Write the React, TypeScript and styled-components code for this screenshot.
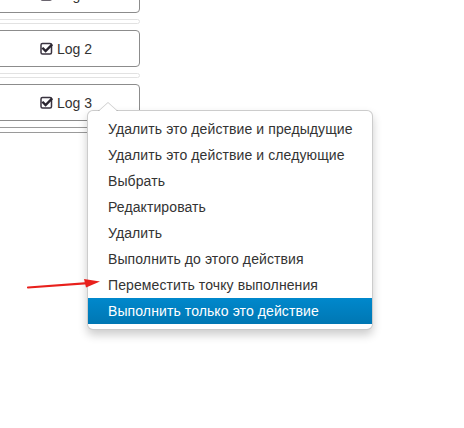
import React from "react";
import styled, { createGlobalStyle } from "styled-components";

const Global = createGlobalStyle`
  html, body { margin: 0; padding: 0; background: #fff; }
  body { font-family: "Liberation Sans", Arial, Helvetica, sans-serif; font-size: 14px; color: #333; }
`;

const Page = styled.div`
  position: relative;
  width: 464px;
  height: 428px;
  overflow: hidden;
  background: #fff;
`;

const LogColumn = styled.div`
  display: flex;
  flex-direction: column;
  gap: 6px;
  width: 148px;
  margin-left: -8px;
  margin-top: -24px;
`;

const LogButton = styled.div`
  box-sizing: border-box;
  height: 37px;
  display: flex;
  align-items: center;
  justify-content: center;
  gap: 4px;
  background: #fff;
  border: 1px solid #8c8c8c;
  border-radius: 4px;
  font-size: 14px;
  color: #333;
`;

const CheckIcon = styled.svg`
  width: 13px;
  height: 13px;
  margin-top: -1px;
  flex: none;
`;

const Separator = styled.div<{ $active?: boolean }>`
  box-sizing: border-box;
  height: ${(p) => (p.$active ? "6px" : "5px")};
  border: 1px solid ${(p) => (p.$active ? "#9a9a9a" : "#e2e2e2")};
  border-radius: 3px;
  background: #fff;
`;

const Menu = styled.ul`
  position: absolute;
  left: 87px;
  top: 110px;
  box-sizing: border-box;
  width: 286px;
  margin: 0;
  padding: 5px 0;
  list-style: none;
  background: #fff;
  border: 1px solid rgba(0, 0, 0, 0.2);
  border-radius: 6px;
  box-shadow: 0 5px 10px rgba(0, 0, 0, 0.2);
  &::before {
    content: "";
    position: absolute;
    top: -9px;
    left: 10px;
    border-style: solid;
    border-width: 0 10px 9px;
    border-color: transparent transparent rgba(0, 0, 0, 0.2);
  }
  &::after {
    content: "";
    position: absolute;
    top: -8px;
    left: 11px;
    border-style: solid;
    border-width: 0 9px 8px;
    border-color: transparent transparent #fff;
  }
`;

const MenuItem = styled.li<{ $active?: boolean }>`
  padding: 3px 20px;
  line-height: 20px;
  font-size: 14px;
  letter-spacing: 0.1px;
  white-space: nowrap;
  color: ${(p) => (p.$active ? "#fff" : "#333")};
  background: ${(p) =>
    p.$active ? "linear-gradient(to bottom, #0088cc, #0077b3)" : "transparent"};
`;

const Pointer = styled.svg`
  position: absolute;
  left: 26px;
  top: 276px;
`;

const Check = () => (
  <CheckIcon viewBox="0 0 13 13">
    <rect x="1" y="1.5" width="10.5" height="10.5" rx="1.5" fill="none" stroke="#3a3340" strokeWidth="1.5" />
    <path d="M3.2 6.6 L5.6 9 L11.4 3.2" fill="none" stroke="#2a2530" strokeWidth="2.4" strokeLinecap="square" />
  </CheckIcon>
);

const items = [
  "Удалить это действие и предыдущие",
  "Удалить это действие и следующие",
  "Выбрать",
  "Редактировать",
  "Удалить",
  "Выполнить до этого действия",
  "Переместить точку выполнения",
  "Выполнить только это действие",
];

export default function App() {
  return (
    <Page>
      <Global />
      <LogColumn>
        <LogButton>
          <Check /> Log 1
        </LogButton>
        <Separator />
        <LogButton>
          <Check /> Log 2
        </LogButton>
        <Separator />
        <LogButton>
          <Check /> Log 3
        </LogButton>
        <Separator $active />
      </LogColumn>
      <Menu>
        {items.map((t, i) => (
          <MenuItem key={t} $active={i === items.length - 1}>
            {t}
          </MenuItem>
        ))}
      </Menu>
      <Pointer width="78" height="16" viewBox="0 0 78 16">
        <path d="M2 11.5 L62 7.2" stroke="#e8201c" strokeWidth="2.2" strokeLinecap="round" fill="none" />
        <path d="M58 3 L74 5.6 L60 11.5 Z" fill="#e8201c" />
      </Pointer>
    </Page>
  );
}
